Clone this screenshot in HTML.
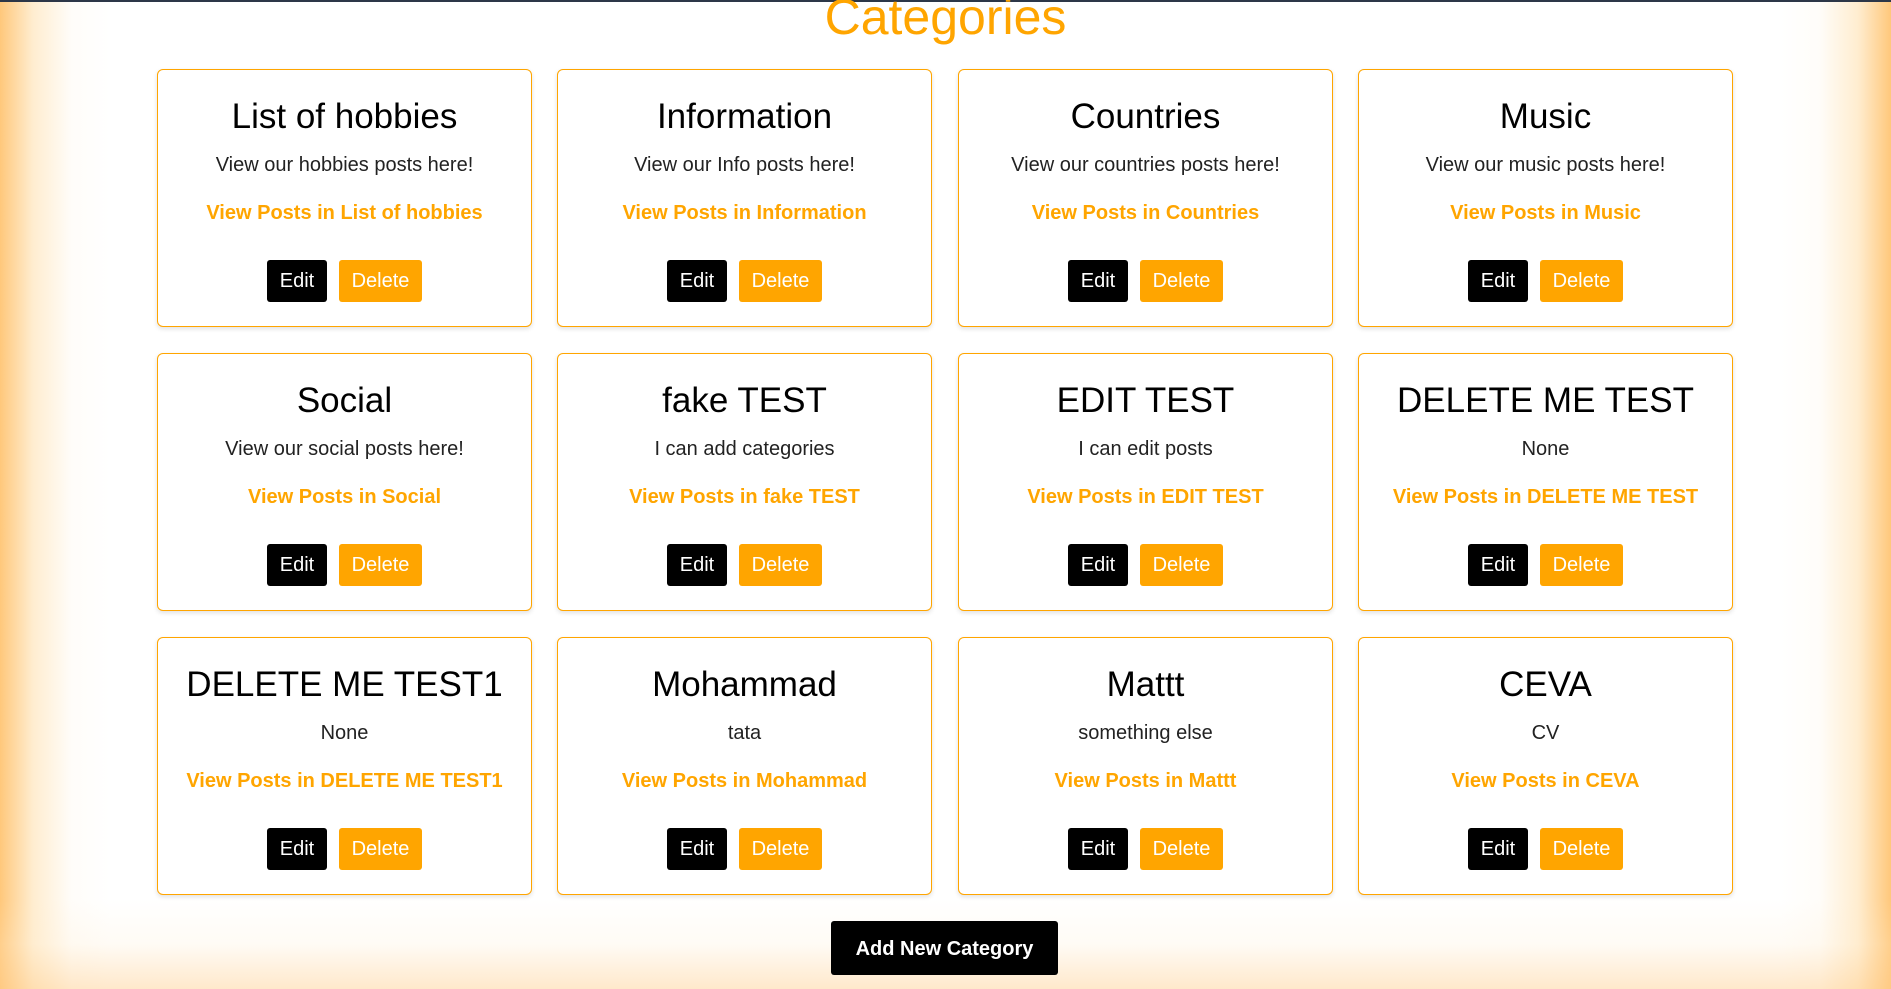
<!DOCTYPE html>
<html><head><style>
html,body{margin:0;padding:0;}
body{width:1891px;height:989px;overflow:hidden;position:relative;background:#fff;font-family:"Liberation Sans",Arial,sans-serif;}
.gl{position:absolute;top:0;bottom:0;left:0;width:110px;background:linear-gradient(to right,rgba(255,190,100,0.85),rgba(255,215,150,0.45) 30%,rgba(255,240,215,0.15) 65%,rgba(255,255,255,0));}
.gr{position:absolute;top:0;bottom:0;right:0;width:110px;background:linear-gradient(to left,rgba(255,190,100,0.85),rgba(255,215,150,0.45) 30%,rgba(255,240,215,0.15) 65%,rgba(255,255,255,0));}
.gb{position:absolute;left:0;right:0;bottom:0;height:90px;background:linear-gradient(to top,rgba(255,205,140,0.45),rgba(255,235,205,0.2) 50%,rgba(255,255,255,0));}
.bar{position:absolute;left:0;top:0;width:100%;height:2px;background:#2d3748;}
h1{position:absolute;left:0;width:100%;top:-12px;margin:0;text-align:center;color:#ffa500;font-weight:normal;font-size:50px;}
.card{position:absolute;width:373px;height:256px;border:1px solid #ffa500;border-radius:6px;background:#fff;box-shadow:0 2px 5px rgba(0,0,0,0.12);text-align:center;}
.card .t{position:absolute;top:47px;left:0;width:100%;font-size:35px;line-height:40px;color:#000;transform:translateY(-50%);white-space:nowrap}
.card .d{position:absolute;top:83px;left:0;width:100%;font-size:20px;line-height:24px;color:#222;}
.card .l{position:absolute;top:131px;left:0;width:100%;font-size:20px;line-height:24px;color:#ffa500;font-weight:bold;}
.card .b{position:absolute;top:190px;left:0;width:100%;text-align:center;font-size:0;}
.btn{display:inline-block;height:42px;line-height:42px;font-size:20px;color:#fff;border-radius:3px;vertical-align:top;}
.e{background:#000;width:60px;}
.x{background:#ffa500;width:83px;margin-left:12px;}
.add{position:absolute;left:831px;top:921px;width:227px;height:54px;line-height:56px;background:#000;color:#fff;font-weight:bold;font-size:20px;text-align:center;border-radius:3px;}
</style></head><body>
<div class="gl"></div><div class="gr"></div><div class="gb"></div>
<div class="bar"></div>
<h1>Categories</h1>

<div class="card" style="left:157px;top:69px"><div class="t">List of hobbies</div><div class="d">View our hobbies posts here!</div><div class="l">View Posts in List of hobbies</div><div class="b"><span class="btn e">Edit</span><span class="btn x">Delete</span></div></div>
<div class="card" style="left:557px;top:69px"><div class="t">Information</div><div class="d">View our Info posts here!</div><div class="l">View Posts in Information</div><div class="b"><span class="btn e">Edit</span><span class="btn x">Delete</span></div></div>
<div class="card" style="left:958px;top:69px"><div class="t">Countries</div><div class="d">View our countries posts here!</div><div class="l">View Posts in Countries</div><div class="b"><span class="btn e">Edit</span><span class="btn x">Delete</span></div></div>
<div class="card" style="left:1358px;top:69px"><div class="t">Music</div><div class="d">View our music posts here!</div><div class="l">View Posts in Music</div><div class="b"><span class="btn e">Edit</span><span class="btn x">Delete</span></div></div>

<div class="card" style="left:157px;top:353px"><div class="t">Social</div><div class="d">View our social posts here!</div><div class="l">View Posts in Social</div><div class="b"><span class="btn e">Edit</span><span class="btn x">Delete</span></div></div>
<div class="card" style="left:557px;top:353px"><div class="t">fake TEST</div><div class="d">I can add categories</div><div class="l">View Posts in fake TEST</div><div class="b"><span class="btn e">Edit</span><span class="btn x">Delete</span></div></div>
<div class="card" style="left:958px;top:353px"><div class="t">EDIT TEST</div><div class="d">I can edit posts</div><div class="l">View Posts in EDIT TEST</div><div class="b"><span class="btn e">Edit</span><span class="btn x">Delete</span></div></div>
<div class="card" style="left:1358px;top:353px"><div class="t">DELETE ME TEST</div><div class="d">None</div><div class="l">View Posts in DELETE ME TEST</div><div class="b"><span class="btn e">Edit</span><span class="btn x">Delete</span></div></div>

<div class="card" style="left:157px;top:637px"><div class="t">DELETE ME TEST1</div><div class="d">None</div><div class="l">View Posts in DELETE ME TEST1</div><div class="b"><span class="btn e">Edit</span><span class="btn x">Delete</span></div></div>
<div class="card" style="left:557px;top:637px"><div class="t">Mohammad</div><div class="d">tata</div><div class="l">View Posts in Mohammad</div><div class="b"><span class="btn e">Edit</span><span class="btn x">Delete</span></div></div>
<div class="card" style="left:958px;top:637px"><div class="t">Mattt</div><div class="d">something else</div><div class="l">View Posts in Mattt</div><div class="b"><span class="btn e">Edit</span><span class="btn x">Delete</span></div></div>
<div class="card" style="left:1358px;top:637px"><div class="t">CEVA</div><div class="d">CV</div><div class="l">View Posts in CEVA</div><div class="b"><span class="btn e">Edit</span><span class="btn x">Delete</span></div></div>

<div class="add">Add New Category</div>
</body></html>
